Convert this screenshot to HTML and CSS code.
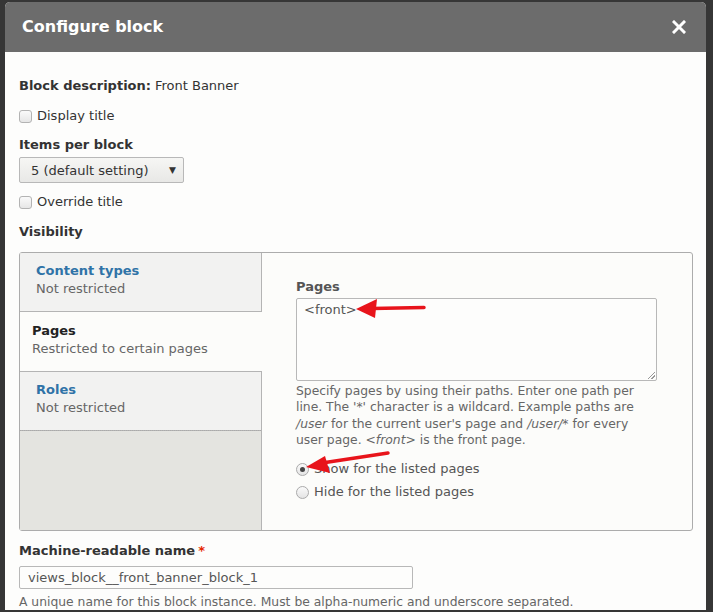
FILE: index.html
```html
<!DOCTYPE html>
<html>
<head>
<meta charset="utf-8">
<link rel="stylesheet" href="styles.css">
</head>
<body>
<div class="dialog">
  <div class="titlebar">
    <span class="title">Configure block</span>
    <svg class="close" width="14" height="14" viewBox="0 0 14 14"><path d="M2 2 L12 12 M12 2 L2 12" stroke="#fff" stroke-width="3" stroke-linecap="square"/></svg>
  </div>
  <div class="content">
    <p class="line desc-line"><b>Block description:</b> Front Banner</p>
    <label class="check line"><span class="cbox"></span>Display title</label>
    <p class="label line">Items per block</p>
    <div class="select"><span>5 (default setting)</span><span class="caret">&#9660;</span></div>
    <label class="check line check2"><span class="cbox"></span>Override title</label>
    <p class="label line vis">Visibility</p>
    <div class="vtabs">
      <div class="menu">
        <div class="tab">
          <div class="tab-title link">Content types</div>
          <div class="tab-sum">Not restricted</div>
        </div>
        <div class="tab selected">
          <div class="tab-title">Pages</div>
          <div class="tab-sum">Restricted to certain pages</div>
        </div>
        <div class="tab">
          <div class="tab-title link">Roles</div>
          <div class="tab-sum">Not restricted</div>
        </div>
        <div class="menu-rest"></div>
      </div>
      <div class="pane">
        <p class="pane-label">Pages</p>
        <div class="textarea"><span>&lt;front&gt;</span><span class="grip"></span></div>
        <p class="help">Specify pages by using their paths. Enter one path per line. The '*' character is a wildcard. Example paths are <i>/user</i> for the current user's page and <i>/user/*</i> for every user page. <i>&lt;front&gt;</i> is the front page.</p>
        <label class="radio r1"><span class="rbox on"></span>Show for the listed pages</label>
        <label class="radio"><span class="rbox"></span>Hide for the listed pages</label>
      </div>
    </div>
    <p class="label line mname">Machine-readable name <span class="req">*</span></p>
    <div class="input">views_block__front_banner_block_1</div>
    <p class="help bottom-help">A unique name for this block instance. Must be alpha-numeric and underscore separated.</p>
  </div>
  <svg class="arrows" width="713" height="612" viewBox="0 0 713 612">
    <line x1="424" y1="307.5" x2="372" y2="308.5" stroke="#e8141b" stroke-width="3.5" stroke-linecap="round"/>
    <polygon points="356,309 377,299 375,318" fill="#e8141b"/>
    <line x1="388" y1="453" x2="322" y2="463" stroke="#e8141b" stroke-width="3.5" stroke-linecap="round"/>
    <polygon points="306,467 325,456 330,473" fill="#e8141b"/>
  </svg>
</div>
</body>
</html>
```
FILE: styles.css
```css
html, body {
  margin: 0;
  padding: 0;
}
body {
  background: #363636;
  width: 713px;
  height: 612px;
  overflow: hidden;
  font-family: "DejaVu Sans", sans-serif;
  font-size: 13px;
  color: #333;
}
.dialog {
  margin: 2px 7px 0 5px;
  height: 608px;
  background: #fdfdfc;
  border-radius: 5px 5px 0 0;
}
.titlebar {
  height: 50px;
  background: #6c6c6c;
  border-radius: 5px 5px 0 0;
  display: flex;
  align-items: center;
  justify-content: space-between;
  padding: 0 20px 0 17px;
  color: #fff;
}
.title {
  font-weight: bold;
  font-size: 16px;
  padding-bottom: 1px;
}
.close {
  display: block;
  margin-bottom: 1px;
}
.content {
  padding: 26px 13px 0 14px;
}
p { margin: 0; }
.line {
  display: flex;
  align-items: center;
  height: 16px;
  line-height: 16px;
}
.desc-line b { margin-right: 4px; }
.check {
  margin-top: 14px;
  gap: 5px;
}
.check2 { margin-top: 11px; }
.cbox {
  width: 11px;
  height: 11px;
  border: 1px solid #b3b3b3;
  border-radius: 3px;
  background: linear-gradient(#fafafa, #e6e6e6);
}
.label {
  font-weight: bold;
  margin-top: 13px;
}
.vis { margin-top: 14px; }
.select {
  margin-top: 4px;
  width: 145px;
  height: 24px;
  border: 1px solid #b8b8b8;
  border-radius: 2px;
  background: linear-gradient(#f6f6f4, #e8e8e6);
  display: flex;
  align-items: center;
  justify-content: space-between;
  padding: 0 7px 0 11px;
  font-size: 13px;
}
.caret { font-size: 9px; color: #333; }
.vtabs {
  margin-top: 12px;
  width: 672px;
  height: 277px;
  border: 1px solid #acacac;
  border-radius: 3px;
  display: flex;
  background: #fcfcfa;
}
.menu {
  width: 241px;
  display: flex;
  flex-direction: column;
  border-right: 1px solid #b4b4b4;
  background: #e4e4e0;
}
.tab {
  background: #f2f2f1;
  border-bottom: 1px solid #b4b4b4;
  padding: 9px 0 0 16px;
  box-sizing: border-box;
  height: 59px;
}
.tab.selected {
  background: #fcfcfa;
  margin-right: -1px;
  padding-left: 12px;
  height: 60px;
  padding-top: 10px;
  border-bottom: 1px solid #b4b4b4;
}
.tab:first-child { border-radius: 3px 0 0 0; }
.tab-title {
  font-weight: bold;
  line-height: 17px;
  color: #222;
}
.tab-title.link { color: #2f73a7; }
.tab-sum {
  color: #666;
  line-height: 19px;
}
.menu-rest {
  flex: 1;
  border-top: 1px dotted #aaa;
  margin-top: -1px;
}
.pane {
  flex: 1;
  padding: 26px 0 0 34px;
}
.pane-label {
  font-weight: bold;
  color: #555;
  line-height: 16px;
}
.textarea {
  position: relative;
  margin-top: 3px;
  width: 352px;
  height: 78px;
  border: 1px solid #b8b8b8;
  border-radius: 2px;
  padding: 3px 0 0 7px;
  color: #555;
  line-height: 16px;
  background: #fdfdfc;
}
.grip {
  position: absolute;
  right: 1px;
  bottom: 1px;
  width: 7px;
  height: 7px;
  background: linear-gradient(135deg, transparent 45%, #999 45%, #999 55%, transparent 55%, transparent 70%, #999 70%, #999 80%, transparent 80%);
}
.help {
  font-size: 12.35px;
  color: #666;
  line-height: 16.3px;
  width: 350px;
  margin-top: 2px;
}
.radio {
  display: flex;
  align-items: center;
  gap: 5px;
  color: #555;
  line-height: 16px;
  height: 16px;
  margin-top: 7px;
}
.radio.r1 { margin-top: 13px; }
.rbox {
  width: 11px;
  height: 11px;
  border: 1px solid #aaa;
  border-radius: 50%;
  background: linear-gradient(#fafafa, #e4e4e4);
  display: flex;
  align-items: center;
  justify-content: center;
}
.rbox.on::after {
  content: "";
  width: 5px;
  height: 5px;
  border-radius: 50%;
  background: #444;
}
.mname { margin-top: 12px; }
.req { color: #e62600; margin-left: 3px; }
.input {
  margin-top: 7px;
  width: 384px;
  height: 21px;
  border: 1px solid #b8b8b8;
  border-radius: 2px;
  padding-left: 8px;
  line-height: 21px;
  color: #555;
  font-size: 13px;
}
.bottom-help {
  width: auto;
  margin-top: 5px;
}
.arrows {
  position: absolute;
  left: 0;
  top: 0;
  pointer-events: none;
}
```
